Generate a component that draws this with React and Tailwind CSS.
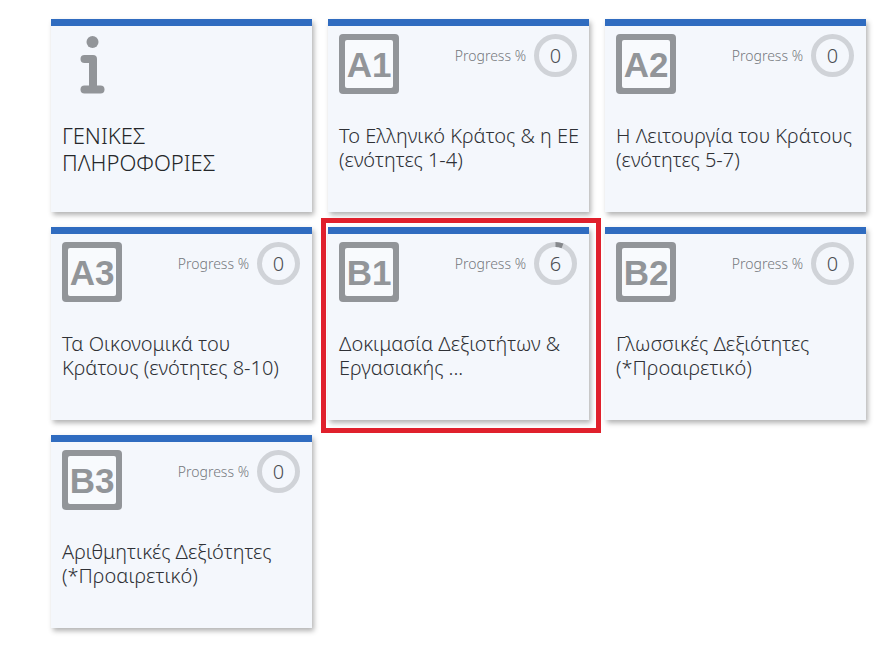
const courses = [
  { id: 'info', title: 'ΓΕΝΙΚΕΣ ΠΛΗΡΟΦΟΡΙΕΣ' },
  { id: 'a1', code: 'Α1', title: 'Το Ελληνικό Κράτος & η ΕΕ (ενότητες 1-4)', progress: 0 },
  { id: 'a2', code: 'Α2', title: 'Η Λειτουργία του Κράτους (ενότητες 5-7)', progress: 0 },
  { id: 'a3', code: 'Α3', title: 'Τα Οικονομικά του Κράτους (ενότητες 8-10)', progress: 0 },
  { id: 'b1', code: 'Β1', title: 'Δοκιμασία Δεξιοτήτων & Εργασιακής ...', progress: 6, highlighted: true },
  { id: 'b2', code: 'Β2', title: 'Γλωσσικές Δεξιότητες (*Προαιρετικό)', progress: 0 },
  { id: 'b3', code: 'Β3', title: 'Αριθμητικές Δεξιότητες (*Προαιρετικό)', progress: 0 },
];

function InfoIcon() {
  return (
    <svg width="60" height="60" viewBox="0 0 60 60" fill="none" stroke="#929599" strokeLinecap="round" strokeLinejoin="round" aria-hidden="true">
      <circle cx="30.5" cy="8" r="6" fill="#929599" stroke="none" />
      <path d="M22.5 25H31V55" strokeWidth="8" />
      <path d="M22.5 55.5H38.5" strokeWidth="8" />
    </svg>
  );
}

function CodeBadge({ code }) {
  return (
    <div className="size-[60px] rounded-sm bg-[#929599] p-[6px]">
      <div className="flex h-full items-center justify-center rounded-xs bg-[#f8fafd] font-['Liberation_Sans',sans-serif] text-[35px] leading-none font-bold text-[#929599]">
        {code}
      </div>
    </div>
  );
}

function ProgressRing({ value }) {
  return (
    <div className="relative flex size-[43px] items-center justify-center">
      <svg className="absolute inset-0 -rotate-90" viewBox="0 0 43 43" fill="none" strokeWidth="5" aria-hidden="true">
        <circle cx="21.5" cy="21.5" r="19" stroke="#d0d3d8" />
        {value > 0 && (
          <circle cx="21.5" cy="21.5" r="19" stroke="#85888c" pathLength="100" strokeDasharray={`${value} 100`} />
        )}
      </svg>
      <span className="relative text-xl leading-6 text-[#4a4d52]">{value}</span>
    </div>
  );
}

function CourseCard({ course }) {
  const isInfo = !course.code;

  return (
    <div className="relative">
      <a
        href={`#${course.id}`}
        className="block h-full min-h-[193px] border-t-[7px] border-[#306cc0] bg-[#f4f7fc] pt-2 pr-2 pb-8 pl-[11px] shadow-[2px_3px_5px_rgba(0,0,0,0.3)]"
      >
        <div className="flex items-start justify-between pr-1">
          {isInfo ? <InfoIcon /> : <CodeBadge code={course.code} />}
          {!isInfo && (
            <div className="flex items-center gap-2">
              <span className="text-sm leading-6 text-[#75787d]">Progress %</span>
              <ProgressRing value={course.progress} />
            </div>
          )}
        </div>
        <h2 className={isInfo ? 'mt-7 text-[22px] leading-[27px] text-[#25272a]' : 'mt-[30px] text-xl leading-6 text-[#2f3136]'}>
          {course.title}
        </h2>
      </a>
      {course.highlighted && (
        <div className="pointer-events-none absolute -top-[9px] -right-3 -bottom-[13px] -left-[7px] border-[5px] border-[#e0202c]" />
      )}
    </div>
  );
}

export default function App() {
  return (
    <main className="min-h-screen bg-white pt-[19px] pr-[18px] pb-5 pl-[51px] font-['Noto_Sans','Open_Sans',sans-serif] font-light">
      <div className="grid grid-cols-3 gap-x-4 gap-y-[15px]">
        {courses.map((course) => (
          <CourseCard key={course.id} course={course} />
        ))}
      </div>
    </main>
  );
}
